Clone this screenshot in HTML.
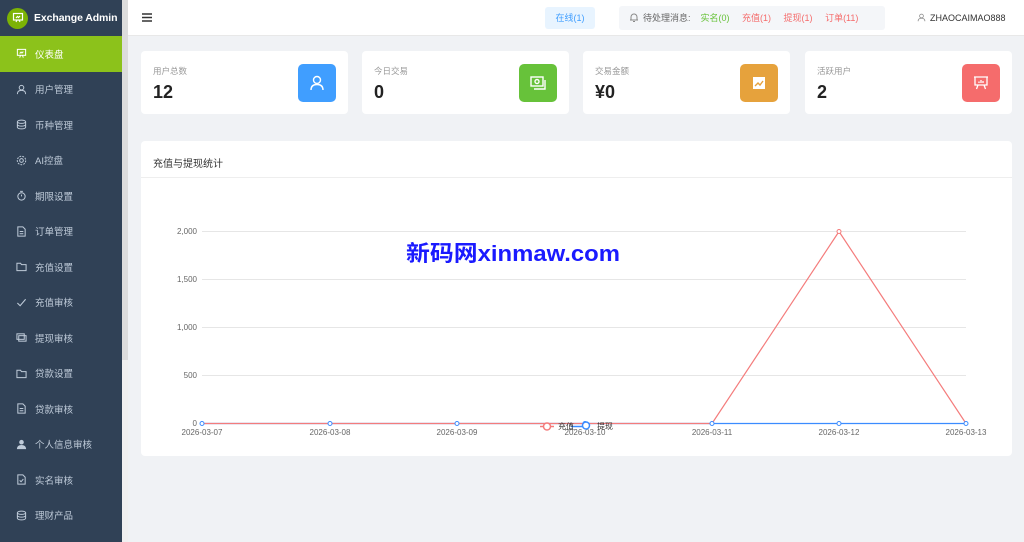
<!DOCTYPE html>
<html><head><meta charset="utf-8"><style>
*{margin:0;padding:0;box-sizing:border-box}
body{width:1024px;height:542px;overflow:hidden;background:#f0f2f5;font-family:"Liberation Sans","Noto Sans CJK SC",sans-serif;position:relative}
.side{position:absolute;left:0;top:0;width:122px;height:542px;background:#304156;overflow:hidden}
.sb{position:absolute;left:122px;top:0;width:6px;height:360px;background:#dcdcdc}
.sb2{position:absolute;left:122px;top:360px;width:6px;height:182px;background:#f0f0f0}
.logo{height:36px;display:flex;align-items:center;padding-left:7px;color:#fff;font-weight:bold;font-size:10.5px;white-space:nowrap;letter-spacing:-0.1px}
.logo i{width:21px;height:21px;border-radius:50%;background:#7cb305;margin-right:6px;display:flex;align-items:center;justify-content:center;flex:none}
.item{height:35.5px;display:flex;align-items:center;padding-left:16px;color:#bfcbd9;font-size:9.5px}
.item svg{margin-right:8px}
.item.act{background:#8cc21b;color:#fff}
.top{position:absolute;left:128px;top:0;right:0;height:36px;background:#fff;border-bottom:1px solid #e8e8e8}
.card{position:absolute;top:51px;width:207px;height:63px;background:#fff;border-radius:4px}
.card .l{position:absolute;left:12px;top:14px;font-size:8.5px;color:#999}
.card .v{position:absolute;left:12px;top:31px;font-size:18px;font-weight:bold;color:#222}
.card .ic{position:absolute;right:12px;top:13px;width:38px;height:38px;border-radius:5px;display:flex;align-items:center;justify-content:center}
.chart{position:absolute;left:141px;top:141px;width:871px;height:315px;background:#fff;border-radius:4px}
.chart .h{height:37px;border-bottom:1px solid #eee;padding:14px 0 0 12px;font-size:10px;color:#333}
</style></head><body>
<div class="side">
<div class="logo"><i><svg width="12" height="12" viewBox="0 0 12 12" fill="none" stroke="#fff" stroke-width="1.2"><rect x="1.5" y="1.5" width="9" height="6.5"/><path d="M4 10l1-2M8 10l-1-2M4 6l1.5-1.5 1 1L8 4"/></svg></i>Exchange Admin</div>
<div class="item act"><svg width="11" height="11" viewBox="0 0 12 12" fill="none" stroke="#fff" stroke-width="1.1"><rect x="1.5" y="1.5" width="9" height="6.5"/><path d="M4 10.5l1-2.5M8 10.5l-1-2.5M4 6l1.5-1.5 1 1L8 4"/></svg>仪表盘</div>
<div class="item"><svg width="11" height="11" viewBox="0 0 12 12" fill="none" stroke="#bfcbd9" stroke-width="1.1"><circle cx="6" cy="4" r="2.5"/><path d="M1.5 11c0-3 2-4 4.5-4s4.5 1 4.5 4"/></svg>用户管理</div>
<div class="item"><svg width="11" height="11" viewBox="0 0 12 12" fill="none" stroke="#bfcbd9" stroke-width="1.1"><ellipse cx="6" cy="3" rx="4.5" ry="1.8"/><path d="M1.5 3v6c0 1 2 1.8 4.5 1.8s4.5-.8 4.5-1.8V3M1.5 6c0 1 2 1.8 4.5 1.8s4.5-.8 4.5-1.8"/></svg>币种管理</div>
<div class="item"><svg width="11" height="11" viewBox="0 0 12 12" fill="none" stroke="#bfcbd9" stroke-width="1.1"><circle cx="6" cy="6" r="2"/><circle cx="6" cy="6" r="4.6" stroke-dasharray="2 1.2"/></svg>AI控盘</div>
<div class="item"><svg width="11" height="11" viewBox="0 0 12 12" fill="none" stroke="#bfcbd9" stroke-width="1.1"><circle cx="6" cy="7" r="4"/><path d="M6 7V5M4.5 1.5h3"/></svg>期限设置</div>
<div class="item"><svg width="11" height="11" viewBox="0 0 12 12" fill="none" stroke="#bfcbd9" stroke-width="1.1"><path d="M2 1h5.5L10 3.5V11H2z M4 6h4M4 8.5h4"/></svg>订单管理</div>
<div class="item"><svg width="11" height="11" viewBox="0 0 12 12" fill="none" stroke="#bfcbd9" stroke-width="1.1"><path d="M1 2.5h4l1 1.5h5v6.5H1z"/></svg>充值设置</div>
<div class="item"><svg width="11" height="11" viewBox="0 0 12 12" fill="none" stroke="#bfcbd9" stroke-width="1.2"><path d="M1.5 6.5l3 3 6-7"/></svg>充值审核</div>
<div class="item"><svg width="11" height="11" viewBox="0 0 12 12" fill="none" stroke="#bfcbd9" stroke-width="1.1"><rect x="1" y="2" width="8" height="6"/><rect x="3" y="4" width="8" height="6"/></svg>提现审核</div>
<div class="item"><svg width="11" height="11" viewBox="0 0 12 12" fill="none" stroke="#bfcbd9" stroke-width="1.1"><path d="M1 2.5h4l1 1.5h5v6.5H1z"/></svg>贷款设置</div>
<div class="item"><svg width="11" height="11" viewBox="0 0 12 12" fill="none" stroke="#bfcbd9" stroke-width="1.1"><path d="M2 1h5.5L10 3.5V11H2z M4 6h4M4 8.5h4"/></svg>贷款审核</div>
<div class="item"><svg width="11" height="11" viewBox="0 0 12 12" fill="#bfcbd9"><circle cx="6" cy="3.5" r="2.5"/><path d="M1 11c0-3 2-4.5 5-4.5s5 1.5 5 4.5z"/></svg>个人信息审核</div>
<div class="item"><svg width="11" height="11" viewBox="0 0 12 12" fill="none" stroke="#bfcbd9" stroke-width="1.1"><path d="M2 1h5.5L10 3.5V11H2z M4 7l1.5 1.5L8 5.5"/></svg>实名审核</div>
<div class="item"><svg width="11" height="11" viewBox="0 0 12 12" fill="none" stroke="#bfcbd9" stroke-width="1.1"><ellipse cx="6" cy="3" rx="4.5" ry="1.8"/><path d="M1.5 3v6c0 1 2 1.8 4.5 1.8s4.5-.8 4.5-1.8V3M1.5 6c0 1 2 1.8 4.5 1.8s4.5-.8 4.5-1.8"/></svg>理财产品</div>
</div>
<div class="sb"></div><div class="sb2"></div>
<div class="top">
<svg style="position:absolute;left:14px;top:13px" width="10" height="9" viewBox="0 0 10 9" stroke="#333" stroke-width="1.4"><path d="M0 1h10M0 4.5h10M0 8h10"/></svg>
<div style="position:absolute;left:417px;top:7px;width:50px;height:22px;background:#e8f4ff;border-radius:3px;color:#409eff;font-size:9px;line-height:22px;text-align:center">在线(1)</div>
<div style="position:absolute;left:491px;top:6px;width:266px;height:24px;background:#f4f6f9;border-radius:3px;font-size:9px;line-height:24px;color:#666;padding-left:10px;white-space:nowrap">
<svg width="10" height="10" viewBox="0 0 10 10" fill="none" stroke="#888" style="vertical-align:-1px;margin-right:4px"><path d="M2 8V5a3 3 0 0 1 6 0v3zM1 8h8M4 9.5h2"/></svg>待处理消息:&nbsp;&nbsp;&nbsp;&nbsp;<span style="color:#67c23a">实名(0)</span>&nbsp;&nbsp;&nbsp;&nbsp;&nbsp;<span style="color:#f56c6c">充值(1)</span>&nbsp;&nbsp;&nbsp;&nbsp;&nbsp;<span style="color:#f56c6c">提现(1)</span>&nbsp;&nbsp;&nbsp;&nbsp;&nbsp;<span style="color:#f56c6c">订单(11)</span></div>
<div style="position:absolute;left:789px;top:0;line-height:36px;font-size:9px;color:#333"><svg width="9" height="9" viewBox="0 0 12 12" fill="none" stroke="#888" style="vertical-align:-1px;margin-right:4px"><circle cx="6" cy="4" r="2.5"/><path d="M1.5 11c0-3 2-4 4.5-4s4.5 1 4.5 4"/></svg>ZHAOCAIMAO888</div>
</div>
<div class="card" style="left:141px"><div class="l">用户总数</div><div class="v">12</div><div class="ic" style="background:#409eff"><svg width="18" height="18" viewBox="0 0 18 18" fill="none" stroke="#fff" stroke-width="1.4"><circle cx="9" cy="6" r="3.5"/><path d="M3 16c0-4 2.5-5.5 6-5.5s6 1.5 6 5.5"/></svg></div></div>
<div class="card" style="left:362px"><div class="l">今日交易</div><div class="v">0</div><div class="ic" style="background:#67c23a"><svg width="18" height="18" viewBox="0 0 18 18" fill="none" stroke="#fff" stroke-width="1.4"><rect x="2" y="3" width="12" height="9"/><circle cx="8" cy="7.5" r="2"/><path d="M5 15h11V6"/></svg></div></div>
<div class="card" style="left:583px"><div class="l">交易金额</div><div class="v">¥0</div><div class="ic" style="background:#e6a23c"><svg width="16" height="16" viewBox="0 0 16 16" fill="#fff"><rect x="2" y="2" width="12" height="12"/><path d="M4 11l3-3 2 2 3-4" stroke="#e6a23c" stroke-width="1.4" fill="none"/></svg></div></div>
<div class="card" style="left:805px"><div class="l">活跃用户</div><div class="v">2</div><div class="ic" style="background:#f56c6c"><svg width="18" height="18" viewBox="0 0 18 18" fill="none" stroke="#fff" stroke-width="1.3"><path d="M2 3h14M3 3v8h12V3M6 11l-1.5 4M12 11l1.5 4M7 9V7.5M9 9V6M11 9V7"/></svg></div></div>
<div class="chart"><div class="h">充值与提现统计</div>
<svg style="position:absolute;left:0;top:0" width="871" height="315" font-size="8" fill="#666" font-family="Liberation Sans,Noto Sans CJK SC,sans-serif">
<g stroke="#e6e6e6" stroke-width="1"><path d="M61 90.5H825M61 138.5H825M61 186.5H825M61 234.5H825"/></g>
<g text-anchor="end"><text x="56" y="93">2,000</text><text x="56" y="141">1,500</text><text x="56" y="189">1,000</text><text x="56" y="237">500</text><text x="56" y="285">0</text></g>
<g text-anchor="middle"><text x="61" y="294">2026-03-07</text><text x="189" y="294">2026-03-08</text><text x="316" y="294">2026-03-09</text><text x="444" y="294">2026-03-10</text><text x="571" y="294">2026-03-11</text><text x="698" y="294">2026-03-12</text><text x="825" y="294">2026-03-13</text></g>
<path d="M61 282.5H825" stroke="#3b8cff" stroke-width="1.2"/>
<path d="M61 282.5H571L698 90.5L825 282.5" stroke="#f47c7c" stroke-width="1.2" fill="none"/>
<g fill="#fff" stroke="#3b8cff"><circle cx="61" cy="282.5" r="2"/><circle cx="189" cy="282.5" r="2"/><circle cx="316" cy="282.5" r="2"/><circle cx="444" cy="282.5" r="2"/><circle cx="571" cy="282.5" r="2"/><circle cx="698" cy="282.5" r="2"/><circle cx="825" cy="282.5" r="2"/></g>
<g fill="#fff" stroke="#f47c7c"><circle cx="698" cy="90.5" r="2"/></g>
<path d="M399 285.5h14" stroke-width="1.5" stroke="#f47c7c"/><path d="M430 285.5h14" stroke-width="1.5" stroke="#3b8cff"/>
<circle cx="406" cy="285.5" r="3.5" fill="#fff" stroke="#f47c7c" stroke-width="1.5"/><circle cx="445" cy="284.5" r="3.5" fill="#fff" stroke="#3b8cff" stroke-width="1.5"/>
<text x="417" y="288" fill="#333">充值</text><text x="456" y="288" fill="#333">提现</text>
<text x="265" y="120" font-size="22" font-weight="bold" textLength="214" lengthAdjust="spacingAndGlyphs" fill="#1a1aff" font-family="Liberation Sans,Noto Sans CJK SC,sans-serif">新码网xinmaw.com</text>
</svg></div>
</body></html>
